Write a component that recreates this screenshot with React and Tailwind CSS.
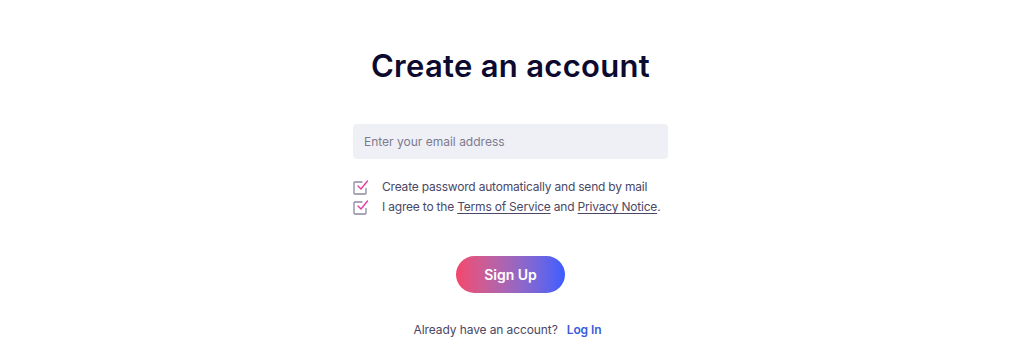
import { useState } from 'react';

function CheckIcon() {
  return (
    <svg width="16" height="16" viewBox="0 0 16 16" fill="none" className="shrink-0">
      <path d="M13 9.5V14a1 1 0 0 1-1 1H2a1 1 0 0 1-1-1V4a1 1 0 0 1 1-1h7" stroke="#8b89a3" strokeWidth="1.3" strokeLinecap="round" />
      <path d="M5 7l3 3 6.5-8" stroke="#e0409f" strokeWidth="1.4" strokeLinecap="round" strokeLinejoin="round" />
    </svg>
  );
}

export default function App() {
  const [email, setEmail] = useState('');

  return (
    <div className="w-full h-[361px] bg-white flex flex-col items-center pr-[3px] font-['Inter',sans-serif]">
      <h1 className="mt-[45px] text-[31px] leading-[42px] font-semibold text-[#0c0b2f] tracking-[0.3px]">
        Create an account
      </h1>

      <input
        type="email"
        value={email}
        onChange={(e) => setEmail(e.target.value)}
        placeholder="Enter your email address"
        className="mt-[37px] w-[315px] h-[35px] rounded bg-[#eff0f5] px-[11px] text-[12px] text-[#4a4866] placeholder:text-[#7d7b90] outline-none"
      />

      <div className="mt-[20px] w-[315px] flex flex-col gap-[4px] text-[12px] tracking-[-0.2px] text-[#4a4866] whitespace-nowrap">
        <div className="flex items-center h-[16px]">
          <CheckIcon />
          <span className="ml-[13px]">Create password automatically and send by mail</span>
        </div>
        <div className="flex items-center h-[16px]">
          <CheckIcon />
          <span className="ml-[13px]">
            I agree to the <a href="#" className="underline underline-offset-2">Terms of Service</a> and{' '}
            <a href="#" className="underline underline-offset-2">Privacy Notice</a>.
          </span>
        </div>
      </div>

      <button className="mt-[41px] w-[109px] h-[37px] rounded-full bg-gradient-to-r from-[#f4456a] to-[#3b5cff] text-white text-[14px] font-semibold">
        Sign Up
      </button>

      <p className="mt-[28px] text-[12px] tracking-[-0.1px] text-[#4a4866] pr-[6px]">
        Already have an account?
        <a href="#" className="ml-[9px] font-semibold text-[#3b5bdb]">Log In</a>
      </p>
    </div>
  );
}
